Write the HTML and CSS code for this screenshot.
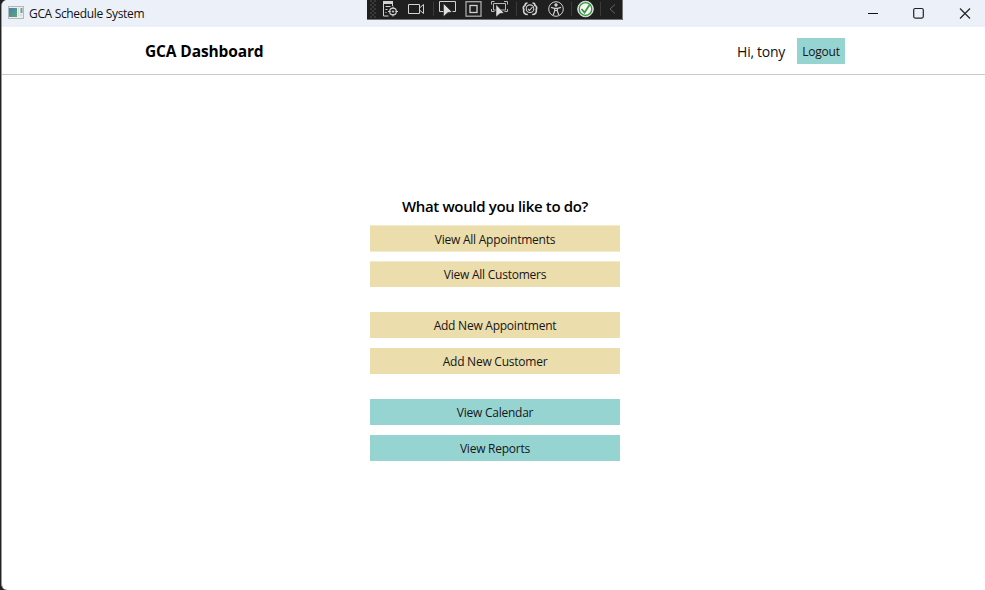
FILE: index.html
```html
<!DOCTYPE html>
<html lang="en">
<head>
<meta charset="utf-8">
<title>GCA Schedule System</title>
<link rel="stylesheet" href="styles.css">
</head>
<body>
<div class="window">
  <div class="titlebar">
    <svg class="app-icon" width="16" height="13" viewBox="0 0 16 13">
      <defs><linearGradient id="g" x1="0" y1="0" x2="1" y2="1"><stop offset="0" stop-color="#4b80ac"/><stop offset="1" stop-color="#59a779"/></linearGradient></defs>
      <rect x=".5" y=".5" width="15" height="12" fill="#ededed" stroke="#b4b8bb"/>
      <rect x="1" y="2" width="8" height="9" fill="url(#g)"/>
      <rect x="12.5" y="2" width="2" height="5" fill="#65a58a"/>
      <path d="M10 3h1M10 5h1M10 7h1M10 9h1M12 9h2" stroke="#c3c7ca"/>
    </svg>
    <span class="app-name">GCA Schedule System</span>
    <div class="controls">
      <svg width="12" height="12" viewBox="0 0 12 12"><path d="M1 6.5h10" stroke="#111" fill="none"/></svg>
      <svg width="12" height="12" viewBox="0 0 12 12"><rect x=".7" y="1.5" width="9.6" height="9.6" rx="1.5" stroke="#222" stroke-width="1.2" fill="none"/></svg>
      <svg width="12" height="12" viewBox="0 0 12 12"><path d="M1 1.5l10 10M11 1.5l-10 10" stroke="#222" stroke-width="1.15" fill="none"/></svg>
    </div>
  </div>
  <header class="header">
    <h1 class="brand">GCA Dashboard</h1>
    <div class="user"><span class="greeting">Hi, tony</span><button class="logout">Logout</button></div>
  </header>
  <main class="menu">
    <h2 class="question">What would you like to do?</h2>
    <div class="group lists">
      <button class="action sand">View All Appointments</button>
      <button class="action sand">View All Customers</button>
    </div>
    <div class="group">
      <button class="action sand">Add New Appointment</button>
      <button class="action sand">Add New Customer</button>
    </div>
    <div class="group">
      <button class="action teal">View Calendar</button>
      <button class="action teal">View Reports</button>
    </div>
  </main>
</div>
<svg class="debugbar" width="256" height="20" viewBox="367 0 256 20" fill="none" stroke="#d2d2d2">
  <defs><pattern id="dots" x="370" y="0" width="4" height="4" patternUnits="userSpaceOnUse"><path d="M0 0h2v2h-2zM2 2h2v2h-2z" fill="#383838" stroke="none"/></pattern></defs>
  <rect x="367" y="0" width="256" height="20" fill="#1f1f1f" stroke="none"/>
  <path d="M367 19.500h255.500V0" stroke="#77736f"/>
  <rect x="370" y="0" width="6" height="18" fill="url(#dots)" stroke="none"/>
  <path d="M433.500 2v14M516.500 2v14M571.500 2v14M600.500 2v14" stroke="#3a3a3a"/>
  <g>
    <path d="M383 2.500h10" stroke-width="3"/>
    <path d="M383.500 3v13h5M392.500 3v3M385.500 6.500h5M385.500 9.500h2M385.500 12.500h1"/>
    <circle cx="393" cy="11.500" r="3.300" stroke-width="1.200"/>
    <path d="M393 6.500v2.500M393 14v2.500M388 11.500h2.500M395.500 11.500h2.500"/>
    <circle cx="393" cy="11.500" r=".7" fill="#d2d2d2"/>
  </g>
  <path d="M408.500 4.500h11v9h-11zM419.500 8l4-3.500v9l-4-3.500"/>
  <path d="M444 11.500h-4.500v-10h16v10h-3"/>
  <path d="M443.500 3.500l8.500 8.500-4 .5-4.500 4z" fill="#dedede" stroke="#1f1f1f" stroke-width=".5"/>
  <rect x="466" y="1.700" width="15" height="14.500" stroke="#aaa" stroke-width="1.300"/>
  <rect x="470" y="5.500" width="7" height="7" stroke-width="1.300"/>
  <path d="M493.500 3.500h12v6.500h-12zM491.500 4.500V1.500h3M504 1.500h3.500V4.500M491.500 9v2.500h3M504.500 11.500h3V9" stroke="#bbb"/>
  <path d="M496 4.500l8 8.500-4 .5-4 3.500z" fill="#dedede" stroke="#1f1f1f" stroke-width=".5"/>
  <g stroke-width="1.700">
    <path d="M527.500 3c-2 0-2.500 1-2.500 2.500-2 1-2 2.500-1.200 4-.8 2.500.5 5 4 5M532.500 3c2 0 2.500 1 2.500 2.500 2 1 2 2.500 1.200 4 .8 2.500-.5 5-4 5"/>
    <circle cx="530" cy="8.700" r="3.800" stroke-width="1.100"/>
    <path d="M528 9l1.500 1.500 3-3.500" stroke-width="1.100"/>
  </g>
  <circle cx="556" cy="9" r="7.300"/>
  <circle cx="556" cy="5" r="1.400" fill="#d2d2d2" stroke-width=".5"/>
  <path d="M551 7.300l3.500 1h3l3.500-1M554.700 8.500v2.500l-1.500 4M557.300 8.500v2.500l1.500 4M554.500 10.500h3" stroke-width="1.200"/>
  <circle cx="585.500" cy="9" r="7.800" fill="#f5f5f5" stroke="#ddd"/>
  <circle cx="585.500" cy="9" r="6.300" stroke="#369439" stroke-width="1.300"/>
  <path d="M581.500 9l3 3.500 5-7.500" stroke="#369439" stroke-width="1.700"/>
  <path d="M615 4.500l-5 4.500 5 4.500" stroke="#666"/>
</svg>
</body>
</html>
```

FILE: styles.css
```css
* { box-sizing: border-box; }
body {
  margin: 0;
  height: 590px;
  overflow: hidden;
  background: #222124;
  font-family: "Open Sans", "Noto Sans", sans-serif;
  color: #111;
}
h1, h2 { margin: 0; white-space: nowrap; }
button {
  border: 0;
  padding: 2px 0 0;
  font: 12px/24px "Open Sans", "Noto Sans", sans-serif;
  color: #161616;
  white-space: nowrap;
}
.window {
  height: 590px;
  margin-left: 1px;
  border-left: 1px solid #99999c;
  border-radius: 6px 0 0 6px;
  overflow: hidden;
  background: #fff;
}
.titlebar {
  display: flex;
  align-items: center;
  height: 27px;
  padding-left: 6px;
  background: #ecf1f9;
}
.app-icon { display: block; margin-top: -2px; }
.app-name { margin-left: 5px; font-size: 12px; line-height: 26px; letter-spacing: -0.33px; }
.controls { display: flex; gap: 34px; margin: -2px 14px 0 auto; }
.controls svg { display: block; }
.debugbar { position: absolute; top: 0; left: 367px; }
.header {
  display: flex;
  align-items: center;
  justify-content: space-between;
  height: 48px;
  padding: 0 140px 0 143px;
  border-bottom: 1px solid #c8c8c8;
}
.brand { font-size: 15.5px; line-height: 26px; font-weight: 700; color: #000; letter-spacing: -0.13px; }
.user { display: flex; align-items: center; gap: 12px; }
.greeting { padding-top: 2px; font-size: 14px; line-height: 26px; letter-spacing: -0.28px; }
.logout { width: 48px; height: 26px; background: #96d4d2; letter-spacing: -0.2px; }
.menu { width: 250px; margin: 119px 0 0 368px; }
.question {
  height: 31px;
  font-size: 15px;
  line-height: 24px;
  font-weight: 600;
  color: #000;
  text-align: center;
  letter-spacing: -0.34px;
}
.group { display: grid; gap: 10px; margin-bottom: 25px; }
.action { width: 250px; height: 26px; letter-spacing: -0.24px; }
.sand { background: #ecddad; }
.teal { background: #96d4d2; }
.lists { gap: 9px; }
.lists .action { border-top: 1px solid #f4ebcf; }
.lists .action:first-child { height: 27px; border-bottom: 1px solid #f4ebcf; }
.lists .action:last-child { padding-top: 0; }
```
